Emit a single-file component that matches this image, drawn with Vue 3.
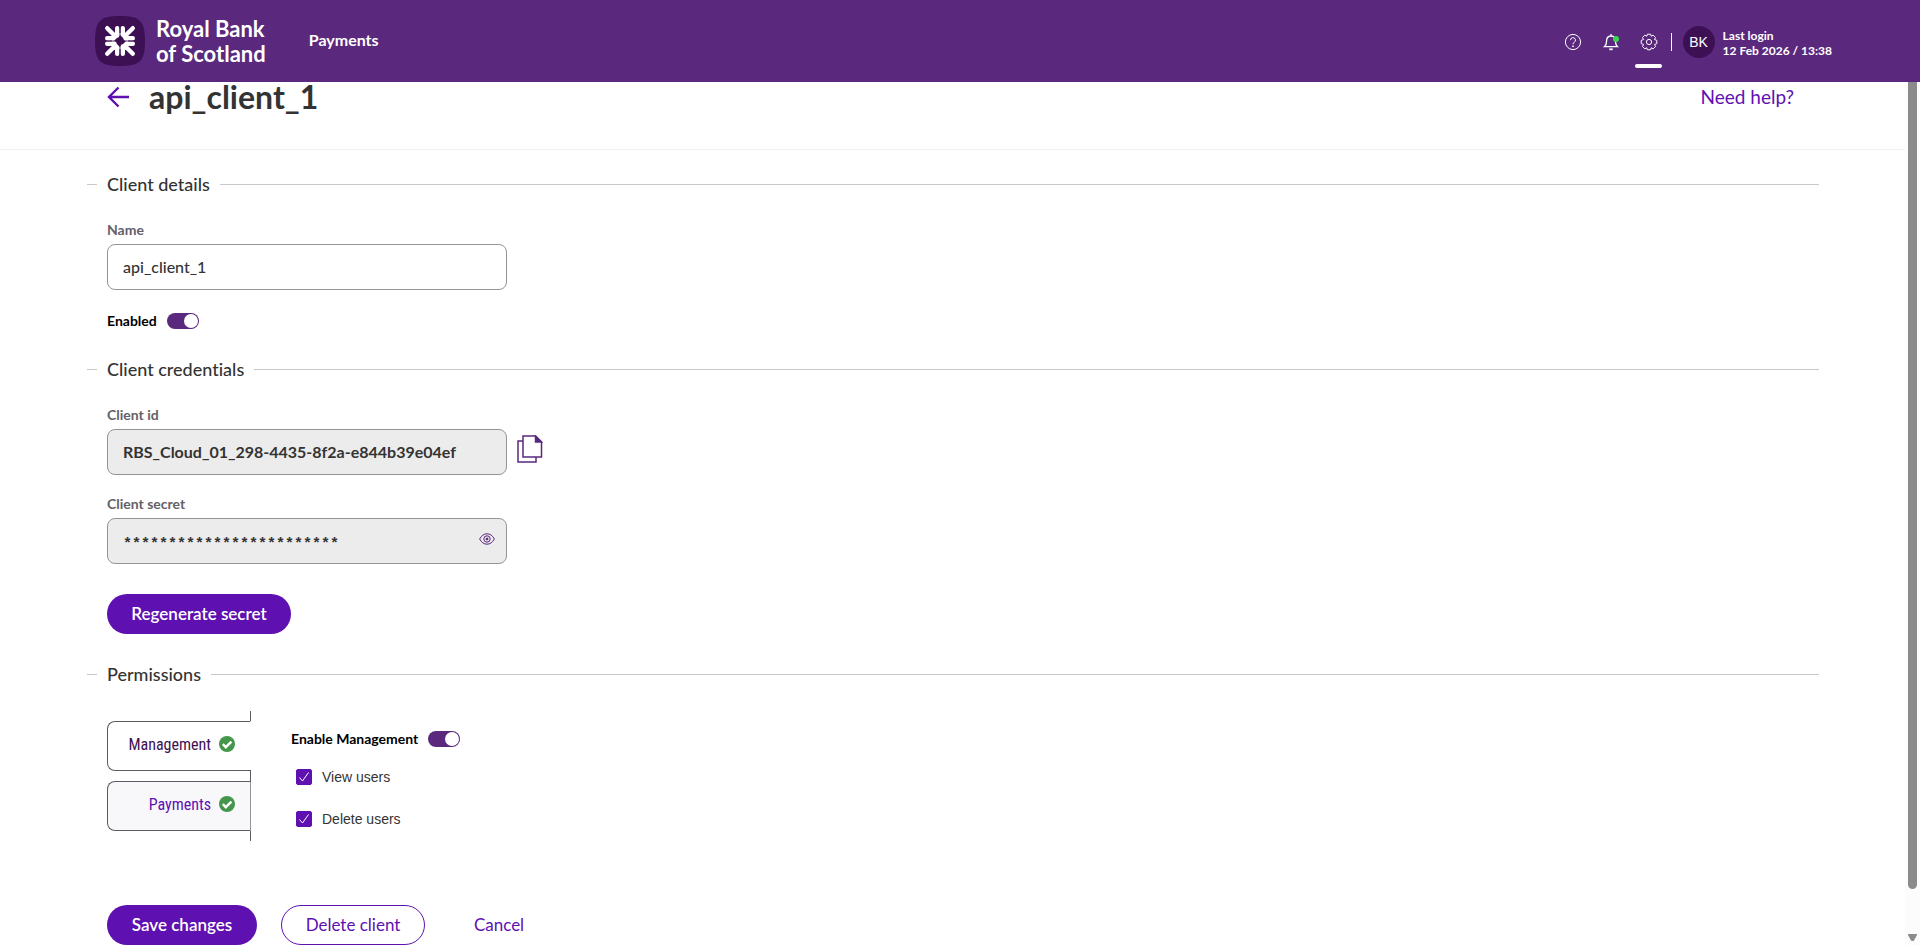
<template>
  <div class="page">
    <header class="topbar">
      <a href="#" class="brand">
        <svg class="brand-mark" viewBox="0 0 50 50" width="50" height="50" aria-hidden="true">
          <path fill="#3c1053" d="M25 0c19 0 25 4 25 25s-6 25-25 25S0 46 0 25 6 0 25 0Z" />
          <g stroke="#fff" stroke-width="4.4" stroke-linecap="round" stroke-linejoin="round" fill="none">
            <g v-for="angle in [0, 90, 180, 270]" :key="angle" :transform="`rotate(${angle} 25 25)`">
              <path d="M12.200 12.200L20.500 20.500M22.200 12.200V19.500M12.200 22.200H18.500" />
            </g>
          </g>
          <path fill="#fff" fill-rule="evenodd" d="M17 17h16v16H17ZM25 18.500L18.500 25L25 31.500L31.500 25Z" />
          <path stroke="#3c1053" stroke-width=".8" d="M25 10v9M25 31v9M10 25h9M31 25h9" />
        </svg>
        <span class="brand-name">Royal Bank<br />of Scotland</span>
      </a>
      <nav class="main-nav">
        <a href="#">Payments</a>
      </nav>
      <div class="tools">
        <button class="tool" type="button" aria-label="Help">
          <svg viewBox="0 0 18 18" width="18" height="18" fill="none" stroke="currentColor">
            <circle cx="9" cy="9" r="7.600" />
            <path d="M6.500 7.200a2.500 2.500 0 1 1 3.600 2.200c-.8.400-1.100.8-1.100 1.800" />
            <circle cx="9" cy="13.200" r=".5" fill="currentColor" />
          </svg>
        </button>
        <button class="tool" type="button" aria-label="Notifications">
          <svg viewBox="0 0 18 18" width="18" height="18" fill="none" stroke="currentColor" stroke-width="1.300">
            <path d="M9 1v2M2.500 13.700h13c-1.600-1.400-2-2.500-2-5.200C13.500 5 11.800 3 9 3S4.500 5 4.500 8.500c0 2.700-.4 3.800-2 5.200Z" />
            <path d="M7.300 16.300h3.400" stroke-width="1.800" />
            <circle cx="14" cy="6" r="3" fill="#3bd64f" stroke="none" />
          </svg>
        </button>
        <button class="tool active" type="button" aria-label="Settings">
          <svg viewBox="0 0 18 18" width="18" height="18" fill="none" stroke="currentColor">
            <path d="M7.400 1.200h3.200l.6 2 2-1 2.300 2.300-1 2 2.300.9v3.200l-2.300.9 1 2-2.300 2.300-2-1-.6 2H7.400l-.6-2-2 1-2.300-2.300 1-2-2.300-.9V7.400l2.300-.9-1-2 2.300-2.300 2 1Z" stroke-linejoin="round" />
            <circle cx="9" cy="9" r="2.600" />
          </svg>
        </button>
        <span class="divider"></span>
        <span class="avatar">BK</span>
        <p class="login">Last login<br />12 Feb 2026 / 13:38</p>
      </div>
    </header>

    <div class="body">
      <main class="main">
        <div class="title-row">
          <button class="back" type="button" aria-label="Back">
            <svg viewBox="0 0 22 22" width="22" height="22" fill="none" stroke="currentColor" stroke-width="2.400">
              <path d="M22 11H2M11.500 1.500L2 11l9.500 9.500" />
            </svg>
          </button>
          <h1>api_client_1</h1>
          <a href="#" class="help-link">Need help?</a>
        </div>

        <form class="form" @submit.prevent>
          <section>
            <h2>Client details</h2>
            <div class="fields">
              <div class="field">
                <label for="name">Name</label>
                <input id="name" v-model="name" type="text" />
              </div>
              <div class="switch-row">
                <label for="enabled">Enabled</label>
                <input id="enabled" v-model="enabled" class="switch" type="checkbox" role="switch" />
              </div>
            </div>
          </section>

          <section>
            <h2>Client credentials</h2>
            <div class="fields">
              <div class="field">
                <label for="client-id">Client id</label>
                <div class="field-line">
                  <input id="client-id" class="strong" type="text" :value="clientId" readonly />
                  <button class="icon-btn copy" type="button" aria-label="Copy client id">
                    <svg viewBox="0 0 26 28" width="26" height="28" fill="none" stroke="currentColor" stroke-width="1.500">
                      <path d="M6 6H1v21h18v-5" />
                      <path d="M6 1h12.500L24.500 7v15H6Z" />
                      <path d="M18.500 1v6h6Z" fill="currentColor" />
                    </svg>
                  </button>
                </div>
              </div>
              <div class="field">
                <label for="client-secret">Client secret</label>
                <div class="secret">
                  <input id="client-secret" type="text" :value="maskedSecret" readonly />
                  <button class="icon-btn reveal" type="button" aria-label="Show secret">
                    <svg viewBox="0 0 16 12" width="16" height="12" fill="none" stroke="currentColor">
                      <path d="M.6 6C2.500 2.500 5 .8 8 .8S13.500 2.500 15.400 6C13.500 9.500 11 11.200 8 11.200S2.500 9.500.6 6Z" />
                      <circle cx="8" cy="6" r="3.200" />
                      <circle cx="8" cy="6" r="1" fill="currentColor" />
                    </svg>
                  </button>
                </div>
              </div>
              <button class="btn primary regenerate" type="button">Regenerate secret</button>
            </div>
          </section>

          <section>
            <h2>Permissions</h2>
            <div class="permissions">
              <div class="tabs" role="tablist">
                <button
                  v-for="tab in tabs"
                  :key="tab"
                  type="button"
                  role="tab"
                  class="tab"
                  :class="{ selected: tab === activeTab }"
                  :aria-selected="tab === activeTab"
                  @click="activeTab = tab"
                >
                  {{ tab }}
                  <svg viewBox="0 0 16 16" width="16" height="16" aria-hidden="true">
                    <circle cx="8" cy="8" r="8" fill="#43964a" />
                    <path d="M3.800 8.200l3 3 5.600-5.600" fill="none" stroke="#fff" stroke-width="2.400" />
                  </svg>
                </button>
              </div>
              <div class="panel" role="tabpanel">
                <div class="switch-row">
                  <label for="enable-management">Enable {{ activeTab }}</label>
                  <input id="enable-management" v-model="tabEnabled" class="switch" type="checkbox" role="switch" />
                </div>
                <label v-for="item in permissions" :key="item.label" class="check-row">
                  <input v-model="item.checked" type="checkbox" />
                  {{ item.label }}
                </label>
              </div>
            </div>
          </section>

          <div class="actions">
            <button class="btn primary save" type="submit">Save changes</button>
            <button class="btn outline" type="button">Delete client</button>
            <button class="btn plain" type="button">Cancel</button>
          </div>
        </form>
      </main>
      <div class="scrollbar" aria-hidden="true">
        <div class="thumb"></div>
        <svg viewBox="0 0 9 7" width="9" height="7"><path fill="#8b8b8b" d="M0 0h9v1L6 6.500q-1.500 1-3 0L0 1Z" /></svg>
      </div>
    </div>
  </div>
</template>

<script setup>
import { ref } from 'vue';

const name = ref('api_client_1');
const enabled = ref(true);
const clientId = 'RBS_Cloud_01_298-4435-8f2a-e844b39e04ef';
const maskedSecret = '*'.repeat(24);

const tabs = ['Management', 'Payments'];
const activeTab = ref('Management');
const tabEnabled = ref(true);
const permissions = ref([
  { label: 'View users', checked: true },
  { label: 'Delete users', checked: true }
]);
</script>

<style>
body {
  background: #fff;
}
</style>

<style scoped>
.page {
  display: flex;
  flex-direction: column;
  min-height: 100vh;
  font-family: Lato, 'Liberation Sans', sans-serif;
  font-variant-ligatures: none;
  color: #333;
}

.page *,
.page *::before,
.page *::after {
  box-sizing: border-box;
}

button {
  font-family: inherit;
  padding: 0;
  border: none;
  background: none;
  color: inherit;
  cursor: pointer;
}

a {
  color: inherit;
  text-decoration: none;
}

svg {
  display: block;
}

.topbar {
  display: flex;
  align-items: center;
  height: 82px;
  padding: 0 88px 0 95px;
  background: #5a287d;
  color: #fff;
}

.brand {
  display: flex;
  align-items: center;
  gap: 11px;
}

.brand-name {
  font-size: 22px;
  font-weight: 700;
  line-height: 25px;
}

.main-nav {
  margin-left: 43px;
  padding-bottom: 3px;
  font-size: 16px;
  font-weight: 700;
}

.tools {
  display: flex;
  align-items: center;
  margin-left: auto;
  padding-top: 2px;
}

.tool {
  position: relative;
  display: flex;
  justify-content: center;
  width: 38px;
}

.tool.active::after {
  content: '';
  position: absolute;
  top: 31px;
  width: 27px;
  height: 4px;
  border-radius: 2px;
  background: #fff;
}

.divider {
  width: 1px;
  height: 18px;
  margin: 0 11px 0 3px;
  background: #fff;
}

.avatar {
  width: 32px;
  margin-right: 8px;
  border-radius: 50%;
  background: #3c1053;
  font-family: 'Liberation Sans', sans-serif;
  font-size: 14px;
  line-height: 32px;
  text-align: center;
}

.login {
  margin: 0;
  padding-top: 2px;
  font-size: 12px;
  font-weight: 700;
  line-height: 15px;
}

.body {
  display: flex;
  flex: 1;
}

.main {
  flex: 1;
}

.title-row {
  display: flex;
  align-items: center;
  padding: 0 111px 37px 107px;
  border-bottom: 1px solid #f1f1f1;
}

.back {
  margin-right: 20px;
  color: #5e10b1;
}

h1 {
  margin: 0;
  font-size: 32px;
  font-weight: 700;
  line-height: 30px;
}

.help-link {
  margin-left: auto;
  padding-bottom: 2px;
  font-size: 19px;
  color: #5e10b1;
}

.form {
  padding: 22px 86px 0 87px;
}

section {
  margin-bottom: 28px;
}

h2 {
  display: flex;
  align-items: center;
  gap: 10px;
  margin: 0;
  font-size: 18px;
  font-weight: 500;
  line-height: 24px;
}

h2::before,
h2::after {
  content: '';
  width: 10px;
  border-top: 1px solid #c8c8c8;
}

h2::after {
  flex: 1;
}

.fields {
  padding: 26px 20px 0;
}

.field {
  margin-bottom: 21px;
}

.field label {
  display: block;
  margin-bottom: 6px;
  font-size: 14px;
  font-weight: 700;
  line-height: 16px;
  color: #646068;
}

.field input {
  display: block;
  width: 400px;
  height: 46px;
  padding: 0 15px 2px;
  border: 1px solid #949494;
  border-radius: 8px;
  background: #fff;
  font-family: inherit;
  font-size: 16px;
  font-weight: 500;
  color: #333;
}

.field input[readonly] {
  background: #ececec;
}

.field input.strong {
  font-weight: 700;
}

.field-line {
  display: flex;
  align-items: flex-start;
  gap: 10px;
}

.icon-btn {
  color: #5a287d;
}

.copy {
  margin-top: 6px;
}

.secret {
  position: relative;
  width: 400px;
}

.field .secret input {
  padding: 7px 15px 0;
  font-family: 'Liberation Mono', monospace;
  font-size: 15px;
  font-weight: 700;
}

.reveal {
  position: absolute;
  top: 15px;
  right: 12px;
}

.switch-row {
  display: flex;
  align-items: center;
  gap: 10px;
  height: 16px;
  font-size: 14px;
  font-weight: 700;
  color: #000;
}

.switch-row label {
  padding-bottom: 2px;
}

.switch {
  display: flex;
  justify-content: flex-end;
  width: 32px;
  height: 16px;
  margin: 0;
  padding: 1px;
  border-radius: 8px;
  background: #5a287d;
  appearance: none;
}

.switch::before {
  content: '';
  width: 14px;
  height: 14px;
  border-radius: 50%;
  background: #fff;
}

.switch:not(:checked) {
  justify-content: flex-start;
  background: #949494;
}

.btn {
  height: 40px;
  padding-bottom: 2px;
  border-radius: 20px;
  font-size: 17px;
}

.primary {
  background: #5e10b1;
  color: #fff;
  font-weight: 600;
}

.regenerate {
  width: 184px;
  margin-top: 9px;
}

.permissions {
  display: flex;
  gap: 40px;
  padding: 25px 20px 0;
}

.tabs {
  display: flex;
  flex-direction: column;
  width: 144px;
}

.tabs::before,
.tabs::after {
  content: '';
  height: 10px;
  border-right: 1px solid #5e5a62;
}

.tab {
  display: flex;
  align-items: center;
  justify-content: flex-end;
  gap: 8px;
  height: 50px;
  padding: 0 15px 4px 0;
  border: 1px solid #5e5a62;
  border-right-color: #949494;
  border-radius: 8px 0 0 8px;
  background: #f8f8fb;
  font-family: 'Roboto Condensed', 'Liberation Sans Narrow', sans-serif;
  font-size: 16px;
  color: #5e10b1;
}

/* the rail carries on through the gap between tabs */
.tab:first-child {
  margin-bottom: 0;
}

.tab + .tab {
  margin-top: 10px;
}

.tab + .tab::before {
  content: '';
  position: absolute;
  right: -1px;
  bottom: 100%;
  width: 1px;
  height: 12px;
  background: #5e5a62;
}

.tab {
  position: relative;
}

.tab.selected {
  border-right-color: #fff;
  background: #fff;
  color: #3c1053;
}

.panel {
  padding-top: 20px;
}

.check-row {
  display: flex;
  align-items: center;
  gap: 10px;
  height: 16px;
  margin: 26px 0 0 5px;
  font-family: 'Liberation Sans', sans-serif;
  font-size: 14px;
}

.switch-row + .check-row {
  margin-top: 22px;
}

.check-row input {
  width: 16px;
  height: 16px;
  margin: 0;
  border: 1px solid #5e10b1;
  border-radius: 2px;
  appearance: none;
}

.check-row input:checked {
  background: #5e10b1 url("data:image/svg+xml,%3Csvg xmlns='http://www.w3.org/2000/svg' viewBox='0 0 14 14'%3E%3Cpath d='M2.500 7.500l3 3.500 6-8.500' fill='none' stroke='white'/%3E%3C/svg%3E") center / 14px 14px no-repeat;
}

.fields > .field + .switch-row {
  margin-top: 23px;
}

.actions {
  display: flex;
  gap: 24px;
  padding-left: 20px;
  margin-top: 64px;
}

.save {
  width: 150px;
}

.outline,
.plain {
  width: 144px;
  border: 1px solid #5e10b1;
  color: #5e10b1;
}

.plain {
  width: 100px;
  border-color: transparent;
}

.scrollbar {
  display: flex;
  flex-direction: column;
  align-items: center;
  justify-content: space-between;
  width: 15px;
  padding-bottom: 4px;
  background: #fcfcfc;
}

.thumb {
  width: 9px;
  height: 94%;
  border-radius: 0 0 5px 5px;
  background: #8b8b8b;
}
</style>
